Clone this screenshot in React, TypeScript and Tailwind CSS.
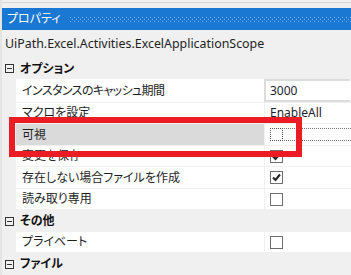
import React from "react";

const font = "font-['Noto_Sans','Noto_Sans_CJK_JP',sans-serif] [font-feature-settings:'palt']";

function Box({ checked = false, dotted = false }: { checked?: boolean; dotted?: boolean }) {
  return (
    <span
      className={`relative block w-[13px] h-[13px] bg-white border ${dotted ? "border-dotted border-[#555]" : "border-[#6e6e6e]"}`}
    >
      {checked && (
        <svg width="11" height="11" viewBox="0 0 11 11" className="absolute left-0 top-0">
          <polyline points="2,5.5 4.5,8 9,2.5" fill="none" stroke="#222" strokeWidth="2" />
        </svg>
      )}
    </span>
  );
}

function Minus() {
  return (
    <svg width="9" height="9" viewBox="0 0 9 9" className="block">
      <rect x="0.5" y="0.5" width="8" height="8" fill="none" stroke="#333" />
      <line x1="2" y1="4.5" x2="7" y2="4.5" stroke="#333" />
    </svg>
  );
}

function Header({ label }: { label: string }) {
  return (
    <div className="h-[22px] flex items-center">
      <span className="ml-[3px] w-[9px]">
        <Minus />
      </span>
      <span className="ml-[6px] text-[12px] font-bold text-[#111]">{label}</span>
    </div>
  );
}

function Row({
  name,
  children,
  selected = false,
  h = "h-[21px]",
  tight = false,
}: {
  name: string;
  children?: React.ReactNode;
  selected?: boolean;
  h?: string;
  tight?: boolean;
}) {
  return (
    <div className={`${h} mb-px flex ml-[14px]`}>
      <div
        className={`w-[248px] flex items-center pl-[6px] text-[12px] text-[#1e1e1e] ${tight ? "tracking-[-0.6px]" : ""} ${selected ? "bg-[#dadada]" : "bg-white"}`}
      >
        {name}
      </div>
      <div className="w-px bg-[#f0f0f0]" />
      <div className="flex-1 bg-white flex items-center relative">{children}</div>
    </div>
  );
}

export default function App() {
  return (
    <div className={`w-[351px] h-[275px] overflow-hidden bg-[#f0f0f0] relative ${font}`}>
      <div className="flex h-full">
        <div className="w-[2px] bg-[#e4e4e4]" />
        <div className="flex-1 flex flex-col">
          <div className="h-[8px] pt-[2px] bg-[#f0f0f0]">
            <div className="h-px bg-[#d8d8d8]" />
          </div>
          <div className="h-[23px] bg-[#1a77d2] flex items-center">
            <span className="ml-[5px] text-[12px] text-white">プロパティ</span>
            <svg className="ml-[9px] flex-1 h-[5px]" height="5">
              <defs>
                <pattern id="dots" width="4" height="4" patternUnits="userSpaceOnUse">
                  <rect x="0" y="0" width="1" height="1" fill="rgba(255,255,255,0.45)" />
                  <rect x="2" y="2" width="1" height="1" fill="rgba(255,255,255,0.45)" />
                </pattern>
              </defs>
              <rect width="100%" height="5" fill="url(#dots)" />
            </svg>
          </div>
          <div className="h-[28px] flex items-center pl-[3px] text-[12.4px] text-[#1e1e1e]">
            UiPath.Excel.Activities.ExcelApplicationScope
          </div>
          <Header label="オプション" />
          <Row name="インスタンスのキャッシュ期間" h="h-[23px]" tight>
            <div className="h-full w-full border-2 border-r-0 border-[#dcdcdc] bg-white flex items-center pl-[4px] -ml-px text-[12px] text-[#1e1e2e]">
              3000
            </div>
          </Row>
          <Row name="マクロを設定">
            <span className="pl-[5px] text-[12px] text-[#1e1e2e]">EnableAll</span>
          </Row>
          <Row name="可視" selected>
            <div className="ml-[5px] flex-1 h-[13px] border-t border-b border-dotted border-[#777] flex">
              <div className="-mt-px">
                <Box dotted />
              </div>
            </div>
          </Row>
          <Row name="変更を保存">
            <span className="ml-[5px]">
              <Box checked />
            </span>
          </Row>
          <Row name="存在しない場合ファイルを作成">
            <span className="ml-[5px]">
              <Box checked />
            </span>
          </Row>
          <Row name="読み取り専用">
            <span className="ml-[5px]">
              <Box />
            </span>
          </Row>
          <Header label="その他" />
          <Row name="プライベート">
            <span className="ml-[5px]">
              <Box />
            </span>
          </Row>
          <Header label="ファイル" />
        </div>
      </div>
      <div className="absolute left-[9px] top-[117px] w-[293px] h-[40px] border-[6px] border-[#ec1c24]" />
    </div>
  );
}
